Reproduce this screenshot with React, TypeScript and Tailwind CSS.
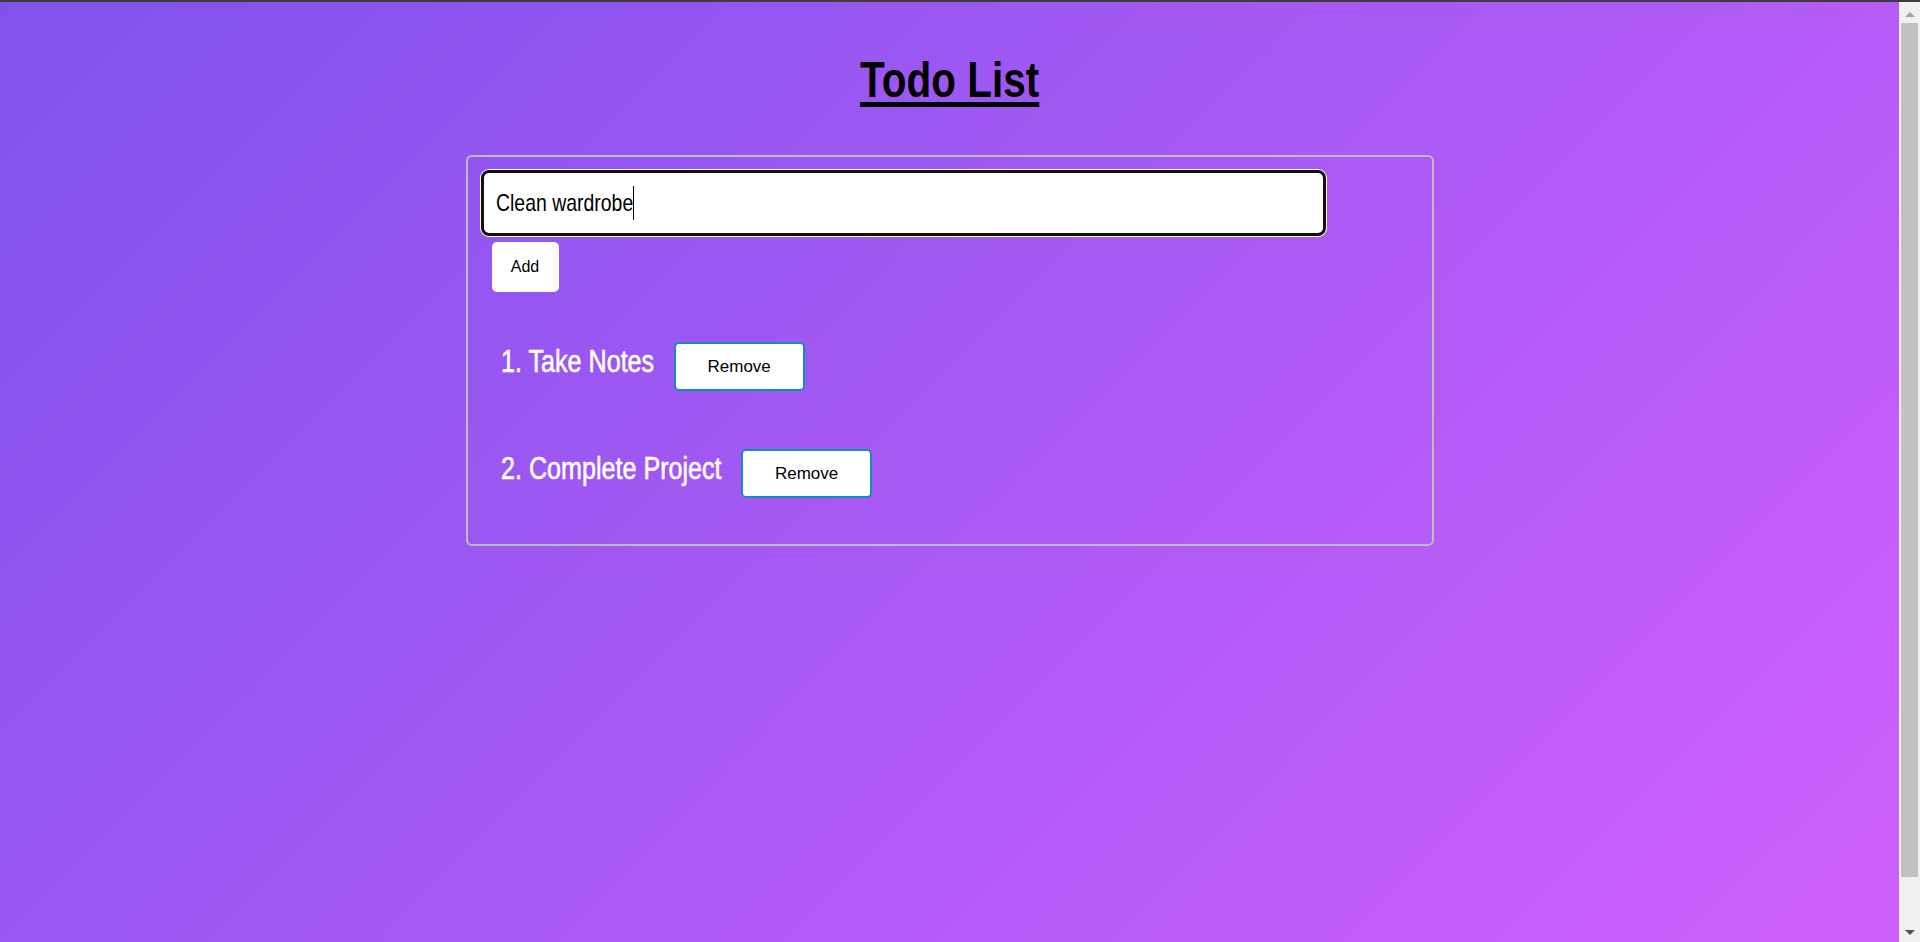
import React, { useLayoutEffect, useRef, useState } from 'react'

// The original uses a narrow handwritten face; we squeeze Liberation Sans
// horizontally and give back the lost width so the flow stays right.
const Condensed = ({ scale, className, children }: { scale: number; className: string; children: React.ReactNode }) => {
  const ref = useRef<HTMLSpanElement>(null)
  const [shrink, setShrink] = useState(0)

  useLayoutEffect(() => {
    if (ref.current) setShrink(ref.current.offsetWidth * (1 - scale))
  }, [children, scale])

  return (
    <span ref={ref} className={`inline-block origin-left ${className}`} style={{ marginRight: -shrink }}>
      {children}
    </span>
  )
}

const sans = { fontFamily: '"Liberation Sans", Arial, sans-serif' }

export default function App() {
  const [todos, setTodos] = useState(['Take Notes', 'Complete Project'])
  const [text, setText] = useState('Clean wardrobe')

  const addTodo = () => {
    if (!text.trim()) return
    setTodos([...todos, text.trim()])
    setText('')
  }

  const removeTodo = (index: number) => {
    setTodos(todos.filter((_, i) => i !== index))
  }

  return (
    <div className="w-[1920px] h-[942px] overflow-hidden flex flex-col" style={sans}>
      {/* window edge */}
      <div className="h-[2px] bg-[#3c3c3c] shrink-0" />

      <div className="flex flex-1 min-h-0">
        {/* Page */}
        <main className="flex-1 bg-[linear-gradient(135deg,#8052ec,#d060fd)] flex flex-col items-center">
          <h1 className="mt-[53px] text-[50px] leading-[50px] font-bold text-black underline decoration-[5px] underline-offset-[5px] scale-x-[0.81]">
            Todo List
          </h1>

          {/* Card */}
          <section className="mt-[50px] w-[968px] border-2 border-[#bdbdbd] rounded-[6px] p-[13px] pb-[46px]">
            <div className="w-[845px] h-[66px] bg-white border-[3px] border-[#111111] rounded-[8px] shadow-[0_0_0_1px_#ffffff] flex items-center pl-[12px] text-[24px] leading-none text-black">
              <Condensed scale={0.81} className="scale-x-[0.81]">{text}</Condensed>
              <span className="inline-block w-px h-[34px] bg-black" />
            </div>

            <button
              onClick={addTodo}
              className="block ml-[11px] mt-[6px] w-[67px] h-[50px] bg-white rounded-[5px] text-[16px] text-black"
            >
              Add
            </button>

            <ol className="mt-[50px] flex flex-col gap-[58px]">
              {todos.map((todo, i) => (
                <li key={i} className="h-[49px] flex items-baseline pl-[20px]">
                  <Condensed
                    scale={0.785}
                    className="scale-x-[0.785] text-[32px] leading-none text-white [-webkit-text-stroke:0.6px_#ffffff]"
                  >
                    {i + 1}. {todo}
                  </Condensed>
                  <button
                    onClick={() => removeTodo(i)}
                    className="ml-[20px] w-[131px] h-[49px] bg-white border-2 border-[#0e8fbf] rounded-[5px] text-[17px] text-black"
                  >
                    Remove
                  </button>
                </li>
              ))}
            </ol>
          </section>
        </main>

        {/* Scrollbar */}
        <aside className="w-[21px] bg-[#f0f0f0] flex flex-col items-center shrink-0">
          <div className="mt-[10px] w-0 h-0 border-x-[5px] border-x-transparent border-b-[5px] border-b-[#a3a3a3]" />
          <div className="mt-[6px] w-[17px] h-[854px] bg-[#c1c1c1]" />
          <div className="mt-auto mb-[7px] w-0 h-0 border-x-[5px] border-x-transparent border-t-[5px] border-t-[#505050]" />
        </aside>
      </div>
    </div>
  )
}
